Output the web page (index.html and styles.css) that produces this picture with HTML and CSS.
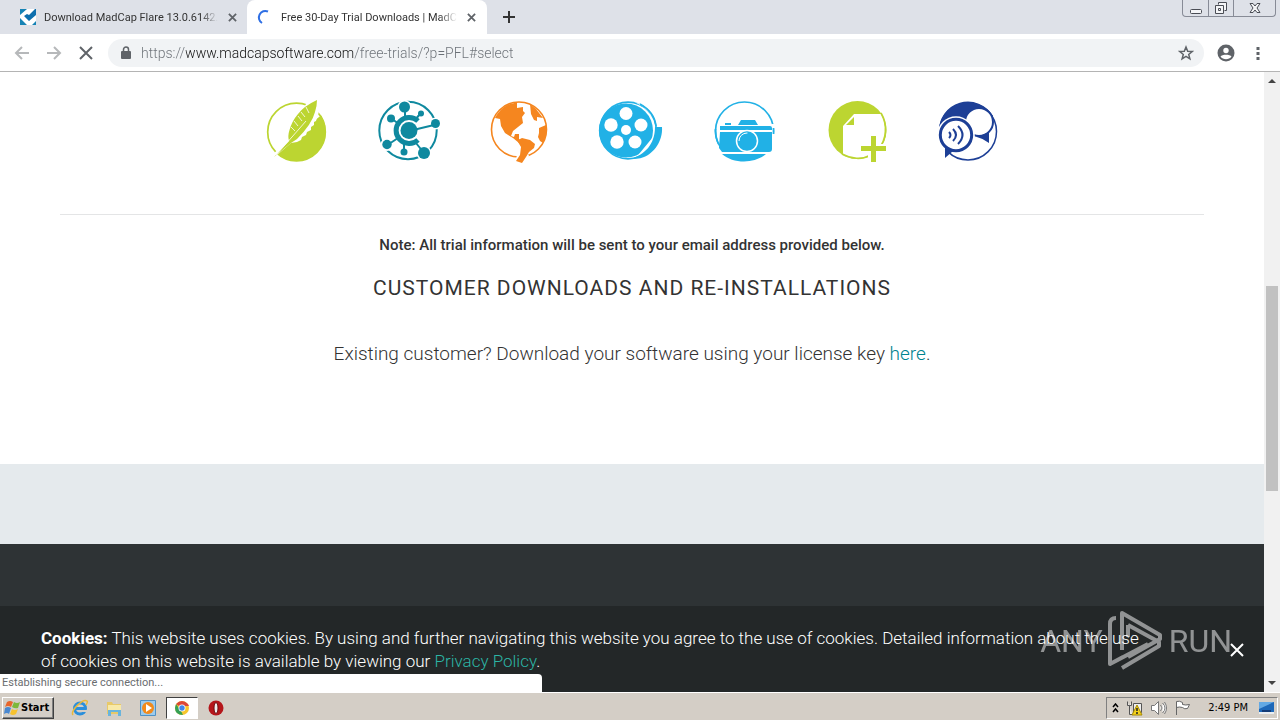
FILE: index.html
```html
<!DOCTYPE html>
<html lang="en">
<head>
    <meta charset="UTF-8">
    <meta name="viewport" content="width=device-width, initial-scale=1.0">
    <title>Free 30-Day Trial Downloads | MadCap Software</title>
    <link rel="stylesheet" href="styles.css">
</head>
<body>
    <!-- Tabs -->
    <header class="tab-strip">
        <div class="tab">
            <svg class="favicon" viewBox="0 0 16 16"><path fill="#fff" d="M0 0h16v16H0z"/><path fill="#1683b5" d="M0 0h7L0 6zM0 9l7 7H0zM16 12v4h-4z"/><path fill="#0d6fae" d="M16 0v6l-7 6-5-5 3-2 2 1 6-6z"/></svg>
            <span class="tab-title">Download MadCap Flare 13.0.6142.</span>
            <button class="icon-btn tab-close" aria-label="Close tab"><svg viewBox="0 0 10 10"><path d="M1 1l8 8M9 1L1 9"/></svg></button>
        </div>
        <div class="tab active">
            <svg class="favicon" viewBox="0 0 16 16"><path fill="none" stroke="#2f6fe4" stroke-width="2" d="M5 14A6.500 6.500 0 0 1 11 2.500"/></svg>
            <span class="tab-title">Free 30-Day Trial Downloads | MadC</span>
            <button class="icon-btn tab-close" aria-label="Close tab"><svg viewBox="0 0 10 10"><path d="M1 1l8 8M9 1L1 9"/></svg></button>
        </div>
        <button class="icon-btn new-tab" aria-label="New tab"><svg viewBox="0 0 12 12"><path d="M6 0v12M0 6h12"/></svg></button>
        <div class="window-controls">
            <button aria-label="Minimize"><svg width="14" height="14" viewBox="0 0 14 14"><rect x="1.500" y="8.500" width="11" height="4" rx="1"/></svg></button>
            <button aria-label="Restore"><svg width="14" height="14" viewBox="0 0 14 14"><path d="M4.500 3.500v-2h8v8h-2M1.500 4.500h8v8h-8zM4.500 7.500h2v2h-2z"/></svg></button>
            <button class="wide" aria-label="Close"><svg width="14" height="14" viewBox="0 0 14 14"><path d="M2 2.500h3l2 2.500 2-2.500h3L9 7l3 4.500H9L7 9l-2 2.500H2L5 7z"/></svg></button>
        </div>
    </header>

    <!-- Toolbar -->
    <div class="toolbar">
        <button class="icon-btn nav-btn dim" aria-label="Back"><svg viewBox="0 0 16 16"><path d="M15 8H2M8 2L2 8l6 6"/></svg></button>
        <button class="icon-btn nav-btn dim" aria-label="Forward"><svg viewBox="0 0 16 16"><path d="M1 8h13M8 2l6 6-6 6"/></svg></button>
        <button class="icon-btn nav-btn" aria-label="Stop loading"><svg viewBox="0 0 16 16"><path d="M2 2l12 12M14 2L2 14"/></svg></button>
        <div class="address-bar">
            <svg class="lock" viewBox="0 0 10 13"><path fill="#5f6368" d="M1 5h8a1 1 0 0 1 1 1v6a1 1 0 0 1-1 1H1a1 1 0 0 1-1-1V6a1 1 0 0 1 1-1z"/><path fill="none" stroke="#5f6368" stroke-width="1.500" d="M2.500 5V3.500a2.500 2.500 0 0 1 5 0V5"/></svg>
            <input class="url" type="text" aria-label="Address" value="https://www.madcapsoftware.com/free-trials/?p=PFL#select">
            <button class="icon-btn star" aria-label="Bookmark this page"><svg viewBox="0 0 16 16"><path d="M8 2l1.700 4.200 4.500.3-3.500 2.900 1.200 4.400L8 11.400l-3.900 2.400 1.200-4.400-3.500-2.900 4.500-.3z"/></svg></button>
        </div>
        <button class="icon-btn user" aria-label="Profile"><svg viewBox="0 0 18 18"><circle cx="9" cy="9" r="8.500" fill="#5f6368"/><circle cx="9" cy="6.500" r="2.700" fill="#fff"/><path fill="#fff" d="M3.500 12.500C5 10 13 10 14.500 12.500 12 16 6 16 3.500 12.500z"/></svg></button>
        <button class="icon-btn menu" aria-label="Menu"><svg viewBox="0 0 4 14"><path fill="#5f6368" d="M.5 1h3v3h-3zM.5 6h3v3h-3zM.5 11h3v3h-3z"/></svg></button>
    </div>

    <!-- Page -->
    <div class="viewport">
        <main class="page">
            <section class="trials">
                <div class="products">
                    <a href="#flare" aria-label="Flare">
                        <svg viewBox="0 0 64 66">
                            <circle cx="32.500" cy="33" r="28.800" fill="none" stroke="#bcd531" stroke-width="1.700"/>
                            <path fill="#bcd531" d="M57 16.500A29.500 29.500 0 0 1 12 54L32 36z"/>
                            <path fill="#fff" d="M55 0q2 10-3 22l-2 1v3l-3 2v3l-4 2-1 3-4 2-1 3-4 2-6 1-14 12-4-1L24 42V33L44 2z"/>
                            <path fill="#bcd531" d="M53 1Q40 7 34 15q-6 7-8.500 16-2 6-.5 11L10 58l17-14 6-4Q48 25 51 13q2-6 2-12z"/>
                            <path stroke="#fff" fill="none" stroke-width=".8" d="M42 22L28 38 12 56M45 14l-3-6M41 18l-4-5M38 22l-4-5M34 27l-4-5M31 32l-4-4"/>
                        </svg>
                    </a>
                    <a href="#central" aria-label="Central">
                        <svg viewBox="0 0 64 66">
                            <g fill="none" stroke="#0f899f">
                                <circle cx="32" cy="31.500" r="28.700" stroke-width="2"/>
                                <g fill="#fff" stroke="none"><circle cx="28.500" cy="8" r="7"/><circle cx="59.500" cy="24.500" r="6"/><circle cx="11" cy="45.500" r="6.500"/><circle cx="48" cy="54" r="7.500"/></g>
                                <path stroke-width="2" d="M29 8v10M44 15l-5 6M16 20l7 5M33 32l25-6M13 45l9-6M28 52v-8M48 54l-8-10"/>
                                <path stroke-width="5" d="M42 22A13 13 0 1 0 42 41"/>
                            </g>
                            <g fill="#0f899f"><circle cx="33" cy="31.500" r="8.500"/><circle cx="28.500" cy="8" r="5.500"/><circle cx="45" cy="14.500" r="3"/><circle cx="15" cy="19.500" r="4"/><circle cx="59.500" cy="24.500" r="4.500"/><circle cx="11" cy="45.500" r="4.700"/><circle cx="28" cy="53" r="3.500"/><circle cx="48" cy="54" r="6"/></g>
                        </svg>
                    </a>
                    <a href="#lingo" aria-label="Lingo">
                        <svg viewBox="0 0 64 66">
                            <circle cx="31" cy="30.500" r="27.500" fill="none" stroke="#f5861f" stroke-width="1.600"/>
                            <path fill="#f5861f" d="M8 17C14 8 20 4 29 4v5l6-1v4l2 2-3 4 1 6-5 4-5 4-2 5 3 1 1-3h4v5l3 3 4-1-1 3-6-1-6-5-8-5-4-7-1-7-5-1z"/>
                            <path fill="#f5861f" d="M42 5l6 5 7 9-6-1v4l-3-1-3-6zM51 29l7-3c1 7 0 12-3 18l-3-2-2-4 1-4z"/>
                            <path fill="#fff" d="M23 54l6 2-2 8h8l6-7-3-6z"/>
                            <path fill="#f5861f" d="M30 41l4-2 8 2 5 4-1 4-5 4-3 5-4 6-6-2 4-6 1-8-3-5z"/>
                        </svg>
                    </a>
                    <a href="#mimic" aria-label="Mimic">
                        <svg viewBox="0 0 64 66">
                            <circle cx="28" cy="31.500" r="28.300" fill="none" stroke="#21b1e6" stroke-width="1.700"/>
                            <circle cx="26" cy="31.500" r="27" fill="#21b1e6"/>
                            <path fill="#fff" d="M34 3C50 9 59 24 53 38L39 55l8 1 14-18 1-10h-7C53 14 45 5 34 3z"/>
                            <path fill="none" stroke="#21b1e6" stroke-width="1.500" d="M40 5c9 5 15 12 16 22"/>
                            <path fill="#21b1e6" d="M55 28h7c1 14-8 26-18 30-5 2-10 2-14 2 15-4 25-15 25-32z"/>
                            <g fill="#fff"><circle cx="26" cy="14.500" r="6.500"/><circle cx="11" cy="26" r="6.700"/><circle cx="41" cy="26" r="6.500"/><circle cx="17" cy="43" r="6.700"/><circle cx="35" cy="43" r="6.500"/><circle cx="26" cy="31" r="5"/></g>
                        </svg>
                    </a>
                    <a href="#capture" aria-label="Capture">
                        <svg viewBox="0 0 64 66">
                            <circle cx="32.500" cy="32" r="29" fill="none" stroke="#21b1e6" stroke-width="1.700"/>
                            <path fill="#fff" d="M6 25h56v31H6z"/>
                            <path fill="#21b1e6" d="M8 27h50q2 0 2 2v2H8zM8 33h52v17q0 3-3 3H10l-3-4zM26 26l3-5h14l3 5zM13 24h6v2h-6zM10 55h44C43 65 21 65 10 55z"/>
                            <path fill="none" stroke="#21b1e6" stroke-width="1.700" d="M3.500 30a29 29 0 0 0 5 18M61.500 29v6"/>
                            <circle cx="35" cy="42" r="10.500" fill="#21b1e6" stroke="#fff" stroke-width="1.500"/>
                            <circle cx="35" cy="42" r="8" fill="none" stroke="#fff" stroke-dasharray="13 40" transform="rotate(180 35 42)"/>
                        </svg>
                    </a>
                    <a href="#contributor" aria-label="Contributor">
                        <svg viewBox="0 0 64 66">
                            <circle cx="33.500" cy="31" r="29" fill="#bcd531"/>
                            <path fill="#fff" d="M19 27l11-12h27q7 12 2 29l-4 10-8 2q-15 7-28 0z"/>
                            <path fill="#bcd531" d="M22 26l8-8v8z"/>
                            <path fill="none" stroke="#bcd531" stroke-width="1.700" d="M57 14c7 12 6 26-3 37M18 55c9 5 20 6 29 1"/>
                            <path fill="#fff" d="M44 35h11v10h11v9H55v10H44V54H34v-9h10z"/>
                            <path fill="#bcd531" d="M47 37h5v10h10v5H52v11h-5V52H37v-5h10z"/>
                        </svg>
                    </a>
                    <a href="#pulse" aria-label="Pulse">
                        <svg viewBox="0 0 64 66">
                            <circle cx="32" cy="32.500" r="28.500" fill="none" stroke="#1d3f96" stroke-width="1.500"/>
                            <path fill="#1d3f96" d="M3 33A29 29 0 0 1 57 17L42 34 20 30z"/>
                            <circle cx="43" cy="23" r="14" fill="#fff" stroke="#1d3f96" stroke-width="2"/>
                            <path fill="#1d3f96" d="M38 37q8 1 15-5v12q-7-5-15-7z"/>
                            <circle cx="20" cy="36" r="18.800" fill="#fff"/>
                            <circle cx="20" cy="36" r="15.700" fill="#fff" stroke="#1d3f96" stroke-width="3"/>
                            <path fill="#1d3f96" d="M9 47l8 5-8 7z"/>
                            <path fill="none" stroke="#1d3f96" stroke-width="2" d="M13 33q3 3 0 6M17 30q6 6 0 12M22 27q9 9 0 18"/>
                        </svg>
                    </a>
                </div>
                <hr>
                <p class="note">Note: All trial information will be sent to your email address provided below.</p>
                <h2>Customer Downloads and Re-Installations</h2>
                <p class="existing">Existing customer? Download your software using your license key <a href="#here">here</a>.</p>
            </section>
            <section class="band"></section>
            <footer class="footer"></footer>

            <div class="cookie-bar">
                <p><strong>Cookies:</strong> This website uses cookies. By using and further navigating this website you agree to the use of cookies. Detailed information about the use of cookies on this website is available by viewing our <a href="#privacy">Privacy Policy</a>.</p>
                <button class="icon-btn cookie-close" aria-label="Dismiss"><svg viewBox="0 0 14 14"><path d="M1 1l12 12M13 1L1 13"/></svg></button>
            </div>
            <div class="status">Establishing secure connection...</div>
        </main>
        <div class="scrollbar">
            <svg width="8" height="4" viewBox="0 0 8 4"><path d="M0 4l4-4 4 4z"/></svg>
            <div class="thumb"></div>
            <svg width="8" height="4" viewBox="0 0 8 4"><path d="M0 0l4 4 4-4z"/></svg>
        </div>
        <div class="watermark">
            <span>ANY</span>
            <svg width="56" height="62" viewBox="0 0 56 62"><path d="M8 8Q2 8 2 14v40l13-7M14 40V3l38 22v4L20 47M20 15l31 17v4L14 58M20 15v12M2 54L40 34"/></svg>
            <span>RUN</span>
        </div>
    </div>

    <!-- Taskbar -->
    <div class="taskbar">
        <button class="start">
            <svg width="17" height="16" viewBox="0 0 17 16"><path fill="#e8662c" d="M3 2q3-2 6 0L7 7Q4 5 1 7z"/><path fill="#7db83a" d="M10 2q3 2 6 0l-2 6q-3 1-6-1z"/><path fill="#4a88d0" d="M1 8q3-2 6 0l-2 6q-2-2-5 0z"/><path fill="#f6c22f" d="M8 9q3 2 6 0l-2 5q-3 2-6 0z"/></svg>
            Start
        </button>
        <nav class="quick-launch">
            <button aria-label="Internet Explorer"><svg viewBox="0 0 18 18"><circle cx="9" cy="9.500" r="5.500" fill="none" stroke="#2b8fdb" stroke-width="3"/><path fill="#2b8fdb" d="M5 8h10v3H5z"/><path fill="#d4cec6" d="M11 11h6v2h-6z"/><path fill="none" stroke="#e9b93a" stroke-width="1.500" d="M2 16C-1 12 12-1 16 2q1 1-1 4"/></svg></button>
            <button aria-label="Explorer"><svg viewBox="0 0 18 18"><path fill="#e8c968" d="M2 3h5l1 2h8v10H2z"/><path fill="#f8e9a8" d="M3 6h13v7H3z"/><path fill="#69b4dc" d="M3 11h13v6h-3v-4H6v4H3z"/></svg></button>
            <button aria-label="Media Player"><svg viewBox="0 0 18 18"><path fill="#9ccbed" stroke="#4f91c5" d="M1.500 1.500h15v15h-15z"/><circle cx="9" cy="9" r="6" fill="#f28a1b"/><path fill="#fff" d="M7 5l6 4-6 4z"/></svg></button>
            <button class="pressed" aria-label="Chrome"><svg viewBox="0 0 18 18"><circle cx="9" cy="9" r="7" fill="#f7c62c"/><path fill="#dc4638" d="M9 9L3 5q6-6 12 0l1 2H9z"/><path fill="#35a055" d="M3 5l5 7 2 4Q2 16 2 9z"/><circle cx="9" cy="9" r="3.500" fill="#fff"/><circle cx="9" cy="9" r="2.700" fill="#4285e8"/></svg></button>
            <button aria-label="Opera"><svg viewBox="0 0 18 18"><circle cx="9" cy="9" r="7.500" fill="#b5161b"/><ellipse cx="9" cy="9" rx="2" ry="5.500" fill="#eee" stroke="#6d090c"/></svg></button>
        </nav>
        <div class="tray">
            <svg class="chevrons" width="7" height="10" viewBox="0 0 7 10"><path fill="none" stroke="#000" stroke-width="1.500" d="M1 4l2.500-3L6 4M1 9l2.500-3L6 9"/></svg>
            <svg width="17" height="16" viewBox="0 0 17 16"><path fill="#eee" stroke="#555" d="M1.500 1.500v4h2v9h3M5.500 1.500v4h-2M7.500 3.500h8v9h-8z"/><path fill="#f5d21c" stroke="#a88a00" d="M11 5l5 10H6z"/><path stroke="#222" stroke-width="1.500" d="M11 8v3M11 12v2"/></svg>
            <svg width="17" height="16" viewBox="0 0 17 16"><path fill="#fff" stroke="#777" d="M1.500 5.500h3l4-4v13l-4-4h-3zM10.500 5q3 3 0 6M12.500 3q5 5 0 10M14.500 2q4 6 0 12"/></svg>
            <svg width="17" height="16" viewBox="0 0 17 16"><path fill="#fff" stroke="#666" d="M2.500 15V1.500q3-1 6 1v2q3 1 7 0l-2 4q-3 1-5-1-3-1-6 0"/></svg>
            <time>2:49 PM</time>
            <svg width="17" height="14" viewBox="0 0 17 14"><path fill="#1e68b8" d="M1 1h15v10H1z"/><path fill="#63a9e4" d="M1 1h15L1 8z"/><path fill="#e9eef2" d="M1 11h15v2H1z"/><path fill="#143c77" d="M4 9h9v2H4z"/></svg>
        </div>
    </div>
</body>
</html>
```
FILE: styles.css
```css
* {
    margin: 0;
    padding: 0;
    box-sizing: border-box;
}

body {
    display: flex;
    flex-direction: column;
    height: 100vh;
    overflow: hidden;
    font-family: "DejaVu Sans Condensed", "DejaVu Sans", sans-serif;
    font-size: 11px;
    color: #333;
    background-color: #fff;
}

button {
    border: none;
    background: none;
    font-family: inherit;
}

.icon-btn {
    display: flex;
    align-items: center;
    justify-content: center;
    flex-shrink: 0;
}

.icon-btn svg {
    fill: none;
    stroke: #5f6368;
    stroke-width: 2;
}

/* Tab strip */
.tab-strip {
    display: flex;
    height: 34px;
    flex-shrink: 0;
    background-color: #dee1e8;
}

.tab {
    display: flex;
    align-items: center;
    width: 240px;
    padding: 0 10px;
}

.tab:first-child {
    width: 247px;
    padding-left: 20px;
}

.tab.active {
    background-color: #fff;
    border-radius: 8px 8px 0 0;
}

.favicon {
    width: 16px;
    height: 16px;
    margin-right: 8px;
    flex-shrink: 0;
}

.tab-title {
    flex: 1;
    white-space: nowrap;
    font-family: Roboto, sans-serif;
    color: #333;
    mask-image: linear-gradient(to right, #000 90%, transparent);
}

.tab-close {
    width: 12px;
    height: 16px;
    margin-left: 8px;
}

.tab-close svg {
    width: 9px;
    height: 9px;
}

.new-tab {
    width: 44px;
}

.new-tab svg {
    width: 12px;
    height: 12px;
    stroke: #333;
}

.window-controls {
    display: flex;
    height: 17px;
    margin-left: auto;
    margin-right: 4px;
    border: 1px solid #878b96;
    border-top: none;
    border-radius: 0 0 4px 4px;
}

.window-controls button {
    display: flex;
    align-items: center;
    justify-content: center;
    width: 25px;
}

.window-controls button + button {
    border-left: 1px solid #878b96;
}

.window-controls .wide {
    width: 42px;
}

.window-controls svg {
    fill: #f4f5f7;
    stroke: #4a4d55;
}

/* Toolbar */
.toolbar {
    display: flex;
    align-items: center;
    height: 38px;
    flex-shrink: 0;
    padding: 0 12px 0 6px;
    border-bottom: 1px solid #b4b4b4;
}

.nav-btn {
    width: 32px;
    height: 32px;
}

.nav-btn svg {
    width: 16px;
    height: 16px;
}

.dim svg {
    stroke: #b6b8ba;
}

.address-bar {
    display: flex;
    align-items: center;
    flex: 1;
    height: 28px;
    margin-left: 6px;
    padding: 0 10px 0 13px;
    border-radius: 14px;
    background-color: #f1f3f5;
}

.lock {
    width: 10px;
    height: 13px;
    margin-right: 10px;
}

/* scheme and path are grey, the host is dark */
.url {
    flex: 1;
    border: none;
    outline: none;
    font-family: Roboto, sans-serif;
    font-size: 14px;
    font-weight: 300;
    color: transparent;
    background-image: linear-gradient(to right, #6b7076 45px, #111 45px, #111 213px, #6b7076 213px);
    background-clip: text;
}

.star svg {
    width: 16px;
    height: 16px;
    stroke-width: 1.5;
}

.user {
    width: 20px;
    margin-left: 12px;
}

.user svg {
    width: 18px;
    height: 18px;
    stroke: none;
}

.menu {
    width: 20px;
    margin-left: 12px;
}

.menu svg {
    width: 4px;
    height: 14px;
    stroke: none;
}

/* Page */
.viewport {
    position: relative;
    display: flex;
    flex: 1;
    min-height: 0;
}

.page {
    position: relative;
    display: flex;
    flex-direction: column;
    flex: 1;
    font-family: Roboto, sans-serif;
    text-align: center;
}

.trials {
    padding: 27px 60px 97px;
}

.products {
    display: flex;
    justify-content: center;
    gap: 48px;
    margin-bottom: 49px;
}

.products svg {
    display: block;
    width: 64px;
    height: 66px;
    overflow: visible;
}

hr {
    border: none;
    border-top: 1px solid #e4e5e6;
}

.note {
    margin-top: 20px;
    font-size: 15px;
    line-height: 20px;
    font-weight: 500;
}

h2 {
    margin-top: 20px;
    font-size: 21px;
    line-height: 26px;
    font-weight: 400;
    letter-spacing: 1px;
    text-transform: uppercase;
}

.existing {
    margin-top: 40px;
    font-size: 19px;
    line-height: 26px;
    font-weight: 300;
}

.existing a {
    color: #00848f;
    text-decoration: none;
}

.band {
    height: 80px;
    background-color: #e5eaed;
}

.footer {
    flex: 1;
    background-color: #2e3335;
}

.cookie-bar {
    position: absolute;
    left: 0;
    right: 0;
    bottom: 0;
    display: flex;
    align-items: flex-start;
    justify-content: space-between;
    height: 86px;
    padding: 21px 20px 0 41px;
    background-color: #232728;
    color: #fff;
    text-align: left;
}

.cookie-bar p {
    max-width: 1110px;
    font-size: 17px;
    line-height: 23px;
    font-weight: 300;
}

.cookie-bar strong {
    font-weight: 700;
}

.cookie-bar a {
    color: #2cb5a5;
    text-decoration: none;
}

.cookie-close {
    height: 46px;
}

.cookie-close svg {
    width: 14px;
    height: 14px;
    stroke: #fff;
}

.status {
    position: absolute;
    left: 0;
    bottom: 0;
    width: 542px;
    height: 18px;
    padding-left: 2px;
    border-radius: 0 4px 0 0;
    background-color: #fff;
    color: #6a6d70;
    line-height: 18px;
    text-align: left;
}

.scrollbar {
    display: flex;
    flex-direction: column;
    align-items: center;
    width: 16px;
    padding: 7px 0;
    background-color: #f1f1f1;
}

.scrollbar svg {
    fill: #444;
}

.thumb {
    width: 12px;
    height: 205px;
    margin-top: 203px;
    margin-bottom: auto;
    background-color: #c1c1c1;
}

.watermark {
    position: absolute;
    right: 48px;
    bottom: 20px;
    display: flex;
    align-items: center;
    gap: 5px;
    color: #fff;
    font-family: Roboto, sans-serif;
    font-size: 32px;
    opacity: 0.5;
    pointer-events: none;
}

.watermark svg {
    fill: none;
    stroke: #fff;
    stroke-width: 4;
    stroke-linejoin: round;
}

/* Taskbar */
.taskbar {
    display: flex;
    align-items: center;
    height: 28px;
    flex-shrink: 0;
    padding: 3px 2px 1px;
    border-top: 1px solid #fff;
    background-color: #d4cec6;
    color: #000;
}

.start {
    display: flex;
    align-items: center;
    height: 22px;
    padding: 0 4px 0 1px;
    border: 1px solid;
    border-color: #fff #404040 #404040 #fff;
    box-shadow: inset -1px -1px #808080;
    font-size: 11px;
    font-weight: bold;
}

.quick-launch {
    display: flex;
    gap: 2px;
    margin-left: 10px;
}

.quick-launch button {
    display: flex;
    align-items: center;
    justify-content: center;
    width: 32px;
    height: 22px;
}

.quick-launch svg {
    width: 18px;
    height: 18px;
}

.quick-launch .pressed {
    border: 1px solid;
    border-color: #404040 #fff #fff #404040;
    background-color: #fff;
}

.tray {
    display: flex;
    align-items: center;
    gap: 7px;
    height: 22px;
    margin-left: auto;
    padding: 0 2px 0 5px;
    border: 1px solid;
    border-color: #808080 #fff #fff #808080;
}

.tray time {
    margin: 0 3px 0 10px;
}
```
